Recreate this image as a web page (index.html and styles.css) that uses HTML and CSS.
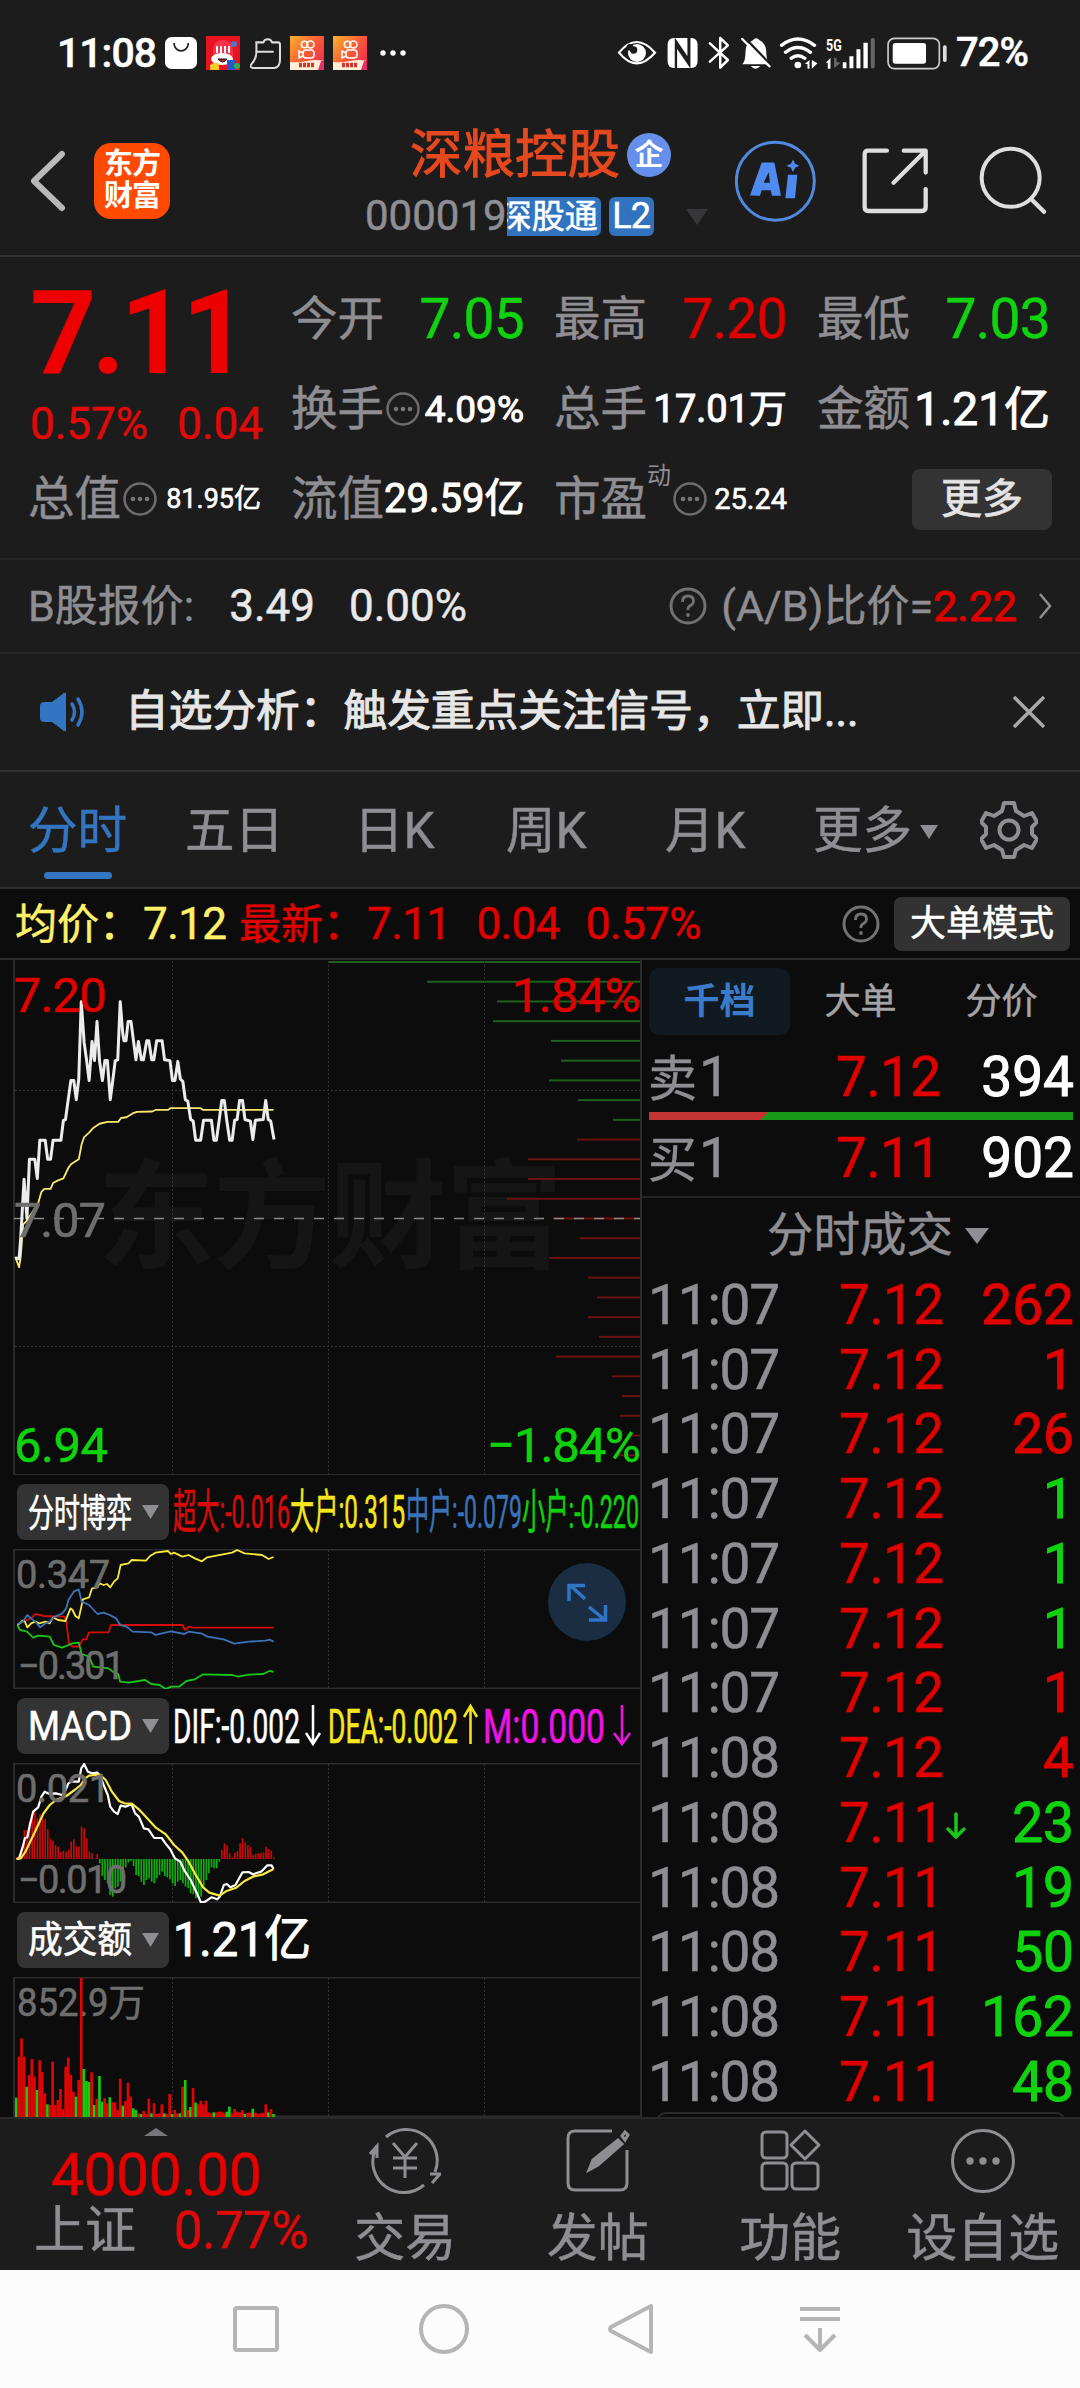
FILE: index.html
```html
<!DOCTYPE html>
<html lang="zh-CN">
<head>
<meta charset="utf-8">
<title>深粮控股 000019</title>
<link rel="stylesheet" href="styles.css">
</head>
<body>
<div class="statusbar">
  <span class="clock">11:08</span>
  <svg class="bag" viewBox="375 50 97 97" width="32" height="32"><rect x="375" y="50" width="97" height="97" rx="20" fill="#fff"/><path d="M402 68c2 32 42 32 44 0" fill="none" stroke="#1c1c1c" stroke-width="5"/></svg>
  <svg class="promo" viewBox="0 0 34 34" width="34" height="34"><rect width="34" height="34" fill="#e8131f"/><path d="M7 16c0-9 4-12 10-12s10 4 10 12v8H7z" fill="#f4334a"/><path d="M10 10h2v7h-2zM14 10h2v7h-2zM18 10h2v7h-2zM22 10h2v7h-2z" fill="#fff"/><ellipse cx="16" cy="23" rx="11" ry="6" fill="#fff"/><path d="M12 23q5 6 9 0z" fill="#c8211c" stroke="#111"/><path d="M4 29q5-4 9-1v6H4z" fill="#ffc928"/><rect x="21" y="24" width="9" height="10" fill="#2458c8"/><circle cx="31" cy="30" r="3" fill="#2fae4e"/><circle cx="28" cy="8" r="3" fill="#4b78c9"/></svg>
  <svg class="basket" viewBox="630 53 92 92" width="31" height="31"><path d="M648 66h22q2-9 13-9 10 0 12 9h18q6 0 6 7v44q0 24-17 25h-62q-11-1-7-10 17-18 16-38V70M648 94h50" fill="none" stroke="#ddd" stroke-width="6" stroke-linejoin="round" stroke-linecap="round"/></svg>
  <svg class="ks" viewBox="0 0 34 34" width="34" height="34"><defs><linearGradient id="ks" x2="1" y2=".8"><stop stop-color="#f9b32d"/><stop offset=".55" stop-color="#fb5a35"/><stop offset="1" stop-color="#ef2b54"/></linearGradient></defs><rect width="34" height="34" fill="url(#ks)"/><g fill="none" stroke="#fff" stroke-width="1.6"><circle cx="14.500" cy="8.500" r="3.200"/><circle cx="20.500" cy="8.500" r="3.500"/><rect x="13" y="14" width="11" height="8" rx="3"/><path d="M13 17l-4-2v7l4-2"/></g><path d="M0 26q8 1 17-1t17 0v9H0z" fill="#fdeed5"/><path d="M9 29h16" stroke="#d2352d" stroke-width="4.500" stroke-dasharray="3 1"/><path d="M28 25h3l-3 9h6v-9z" fill="#e72e6a"/></svg>
  <svg class="ks" viewBox="0 0 34 34" width="34" height="34"><rect width="34" height="34" fill="url(#ks)"/><g fill="none" stroke="#fff" stroke-width="1.6"><circle cx="14.500" cy="8.500" r="3.200"/><circle cx="20.500" cy="8.500" r="3.500"/><rect x="13" y="14" width="11" height="8" rx="3"/><path d="M13 17l-4-2v7l4-2"/></g><path d="M0 26q8 1 17-1t17 0v9H0z" fill="#fdeed5"/><path d="M9 29h16" stroke="#d2352d" stroke-width="4.500" stroke-dasharray="3 1"/><path d="M28 25h3l-3 9h6v-9z" fill="#e72e6a"/></svg>
  <svg class="dots" viewBox="0 0 26 34" width="26" height="34" fill="#fff"><circle cx="3" cy="17" r="2.700"/><circle cx="13" cy="17" r="2.700"/><circle cx="23" cy="17" r="2.700"/></svg>
  <svg class="sysicons" viewBox="48 45 1000 108" width="333" height="36" fill="#fff">
    <path d="M57 98q52-64 108 0q-56 64-108 0z" fill="none" stroke="#fff" stroke-width="6.500"/><circle cx="111" cy="99" r="27"/><circle cx="101" cy="90" r="11" fill="#1c1c1c"/><circle cx="90" cy="82" r="10" fill="#1c1c1c"/>
    <rect x="203" y="54" width="90" height="90" rx="18"/><path d="M228 144V64l38 56V54M228 144V64M268 54v80l-38-56" fill="none" stroke="#1c1c1c" stroke-width="7"/>
    <path d="M330 70l54 50-23 23V54l23 22-54 49" fill="none" stroke="#fff" stroke-width="7.500" stroke-linejoin="round" stroke-linecap="round"/>
    <path d="M427 133q10-8 10-40 0-22 22-32 10-12 20 0 19 9 20 32 0 28 10 40zM453 138h28q-14 17-28 0z"/><path d="M432 50l82 86" stroke="#1c1c1c" stroke-width="7"/><path d="M427 57l82 82" stroke="#fff" stroke-width="7" stroke-linecap="round"/>
    <g fill="none" stroke="#fff" stroke-width="10" stroke-linecap="round"><path d="M545 76q49-38 99 0M557 97q37-29 75 0M574 115q20-16 41 0"/></g><circle cx="594" cy="135" r="10"/><path d="M615 132l14-12v26h-6v-14zM636 120v26l17-16z"/>
    <text x="679" y="92" font-size="49" textLength="47" lengthAdjust="spacingAndGlyphs" font-weight="700">5G</text>
    <path d="M678 128l14-14v32h-8v-18z"/><path d="M703 113v32l19-17-12-3v-12z" fill="#666"/><path d="M729 127h11v18h-11zM749 109h12v36h-12zM770 88h12v57h-12zM791 68h13v77h-13z"/><rect x="813" y="54" width="12" height="91" rx="5" fill="#666"/>
    <rect x="865" y="55" width="154" height="91" rx="19" fill="none" stroke="#ccc" stroke-width="5"/><rect x="879" y="69" width="100" height="62" rx="8"/><rect x="1030" y="76" width="11" height="50" rx="5" fill="#ddd"/>
  </svg>
  <span class="battery">72%</span>
</div>

<header class="titlebar">
  <svg class="back" viewBox="0 0 36 62" width="36" height="62"><path d="M32 4L4 31l28 27" fill="none" stroke="#b9b9bb" stroke-width="6" stroke-linecap="round" stroke-linejoin="round"/></svg>
  <div class="brand"><span>东方</span><span>财富</span></div>
  <div class="stock">
    <div class="name">深粮控股<span class="corp">企</span></div>
    <div class="code">000019<span class="tag clip"><i>深股通</i></span><span class="tag">L2</span>
      <svg class="drop" viewBox="0 0 24 16" width="24" height="16"><path d="M1 0h22L12 16z" fill="#373739"/></svg></div>
  </div>
  <svg class="ai" viewBox="404 363 243 245" width="81" height="82"><circle cx="525" cy="486" r="117" fill="none" stroke="#5289de" stroke-width="9"/><path d="M449 529L484 430h38l20 100h-27l-4-17h-27l-5 17zM490 491h19l-4-32z" fill="#4e8af0" fill-rule="evenodd"/><path d="M563 467h28l-7 70h-29z" fill="#4e8af0"/><path d="M578 421l6 13 13 6-13 6-6 13-6-13-14-6 14-6z" fill="#4e8af0"/></svg>
  <svg class="share" viewBox="788 384 202 202" width="67" height="67"><path d="M863 395h-56q-11 0-11 11v159q0 12 11 12h161q12 0 12-12v-54M914 395h66v66M976 399l-93 93" fill="none" stroke="#dededf" stroke-width="13" stroke-linecap="round" stroke-linejoin="round"/></svg>
  <svg class="search" viewBox="1138 380 204 206" width="68" height="69"><g fill="none" stroke="#dededf" stroke-width="12" stroke-linecap="round"><circle cx="1233" cy="475" r="87"/><path d="M1298 542l35 35" stroke-width="13"/></g></svg>
</header>

<section class="quote">
  <div class="last"><div class="price">7.11</div><div class="chg"><span>0.57%</span><span>0.04</span></div></div>
  <div class="cell">今开<b class="g">7.05</b></div>
  <div class="cell">最高<b class="r">7.20</b></div>
  <div class="cell">最低<b class="g">7.03</b></div>
  <div class="cell">换手<svg class="info" viewBox="0 0 34 34"><use href="#more"/></svg><b class="s37">4.09%</b></div>
  <div class="cell">总手<b class="s38">17.01万</b></div>
  <div class="cell">金额<b class="s46">1.21亿</b></div>
  <div class="cell">总值<svg class="info" viewBox="0 0 34 34"><use href="#more"/></svg><b class="s27">81.95亿</b></div>
  <div class="cell">流值<b class="s40">29.59亿</b></div>
  <div class="cell">市盈<sup>动</sup><svg class="info" viewBox="0 0 34 34"><use href="#more"/></svg><b class="s29">25.24</b></div>
  <div class="cell"><span class="morebtn">更多</span></div>
</section>

<section class="bshare">
  <span>B股报价:</span><span class="w v1">3.49</span><span class="w v2">0.00%</span>
  <svg class="help" viewBox="0 0 38 38" width="38" height="38"><use href="#help"/></svg>
  <span class="ratio">(A/B)比价=<em>2.22</em></span>
  <svg class="chev" viewBox="0 0 14 26" width="14" height="26"><path d="M2 1l10 12L2 25" fill="none" stroke="#8e8e93" stroke-width="2.500"/></svg>
</section>

<section class="notice">
  <svg viewBox="0 0 50 40" width="50" height="40"><path d="M5 10h8L25 1q2-1 2 1v36q0 2-2 1L13 30H5q-4 0-4-4V14q0-4 4-4z" fill="#3375c1"/><path d="M33 12q5 8 0 16M39 7q8 13 0 26" fill="none" stroke="#3375c1" stroke-width="3.500" stroke-linecap="round"/></svg>
  <span>自选分析：触发重点关注信号，立即...</span>
  <svg class="close" viewBox="0 0 34 34" width="34" height="34"><path d="M2 2l30 30M32 2L2 32" stroke="#a9a9ab" stroke-width="3.500"/></svg>
</section>

<nav class="tabs">
  <span class="on">分时</span><span>五日</span><span>日K</span><span>周K</span><span>月K</span>
  <span>更多<svg class="tri" viewBox="0 0 18 14" width="18" height="14"><path d="M0 0h18L9 14z" fill="#8e8e93"/></svg></span>
  <svg class="gear" viewBox="0 0 58 58" width="58" height="58" fill="none" stroke="#8e8e93" stroke-width="4"><path stroke-linejoin="round" d="M24 2h10l2 8 8 5 8-3 5 9-5 5v7l5 5-5 9-8-3-8 5-2 7H24l-2-7-8-5-8 3-5-9 5-5v-7l-5-5 5-9 8 3 8-5z"/><circle cx="29" cy="29" r="9.500"/></svg>
</nav>

<section class="avg">
  <span class="y">均价：<b>7.12</b></span><span class="r">最新：<b>7.11</b><b>0.04</b><b>0.57%</b></span>
  <svg class="help" viewBox="0 0 38 38" width="38" height="38"><use href="#help"/></svg>
  <span class="mode">大单模式</span>
</section>

<main class="board">
  <div class="charts">
    <svg viewBox="0 0 641 515" width="641" height="515">
      <text class="mark" x="97" y="299" textLength="466">东方财富</text>
      <g id="levels"></g>
      <path class="frame" d="M14 0V515M14 515H641"/>
      <path class="grid" d="M172.500 1V515M328.500 1V515M484.500 1V515M15 130.500H640M15 386.500H640"/>
      <path d="M14 258.500H640" stroke="#8a8a8a" stroke-width="1.700" stroke-dasharray="10 10"/>
      <g class="plot" transform="translate(0 -80) scale(.41454 .38265)">
        <polyline stroke="#f9ea6d" points="37,985 46,1012 50,985 56,900 65,890 92,845 100,815 107,807 122,807 128,792 140,785 153,780 165,752 172,742 190,730 197,690 203,672 215,660 225,648 240,637 260,632 285,632 292,622 305,620 320,610 330,606 367,605 375,601 405,601 412,596 483,596 490,601 660,601"/>
        <polyline class="bold" stroke="#ececec" points="37,988 46,990 50,935 58,782 65,885 71,730 84,730 90,780 96,680 109,680 115,730 122,730 128,680 147,680 153,628 158,626 165,570 171,524 178,524 184,574 190,520 196,318 203,425 209,472 215,524 222,422 228,472 234,370 240,472 247,524 253,472 259,472 266,574 272,524 278,472 284,470 290,318 296,400 299,420 304,420 309,370 316,370 322,420 328,470 334,422 341,470 346,470 354,420 359,420 366,470 371,470 378,420 391,420 397,470 410,472 416,524 422,524 429,474 435,520 441,526 447,574 453,578 460,626 466,630 472,680 484,680 491,628 510,628 516,680 522,680 529,626 535,576 541,576 547,628 554,680 560,680 566,628 572,626 578,576 585,576 591,626 604,630 610,678 616,628 635,626 641,576 647,626 653,630 661,678"/>
      </g>
      <g class="axis">
        <text x="14" y="52" textLength="93" color="#e00000">7.20</text>
        <text x="14" y="277" textLength="92" color="#6e6e6e">7.07</text>
        <text x="14" y="502" textLength="94" color="#0fd30f">6.94</text>
        <text x="512" y="52" textLength="129" color="#e00000">1.84%</text>
        <text x="487" y="502" textLength="154" color="#0fd30f">−1.84%</text>
      </g>
    </svg>
    <div class="ind">
      <span class="pick"><svg viewBox="0 0 152 56" width="152" height="56"><text x="11" y="42" font-size="38" textLength="104" lengthAdjust="spacingAndGlyphs">分时博弈</text><path d="M125 21h17l-8.500 14z" fill="#8e8e93"/></svg></span>
      <svg viewBox="173 0 467 74" width="467" height="74" font-size="47">
        <text x="173" y="53" textLength="117" lengthAdjust="spacingAndGlyphs" color="#d80b0b">超大:-0.016</text>
        <text x="290" y="53" textLength="115" lengthAdjust="spacingAndGlyphs" color="#f8e71c">大户:0.315</text>
        <text x="406" y="53" textLength="116" lengthAdjust="spacingAndGlyphs" color="#3b73b9">中户:-0.079</text>
        <text x="522" y="53" textLength="117" lengthAdjust="spacingAndGlyphs" color="#0fd30f">小户:-0.220</text>
      </svg>
    </div>
    <svg viewBox="0 0 641 140" width="641" height="140">
      <path class="frame" d="M14 .500H640M14 0V140M14 139.500H640"/>
      <path class="grid" d="M172.500 1V139M328.500 1V139M484.500 1V139"/>
      <g class="plot" transform="translate(0 -79) scale(.41454 .33333)">
        <polyline stroke="#d80b0b" points="42,462 75,445 85,432 105,438 155,440 160,455 166,520 175,530 190,530 200,508 208,508 215,487 262,487 268,465 440,465 447,480 455,470 465,473 660,473"/>
        <polyline stroke="#f8e93c" points="42,465 48,460 54,452 60,455 66,472 75,460 85,455 95,460 110,455 120,460 128,442 140,450 158,453 170,415 175,420 182,438 190,445 200,388 215,382 222,355 235,352 240,340 250,345 258,342 266,352 275,335 284,325 291,285 310,280 318,270 352,272 362,258 375,248 405,243 412,252 420,248 440,260 455,255 470,265 487,274 500,262 560,248 572,240 590,250 632,255 648,267 660,261"/>
        <polyline stroke="#3b73b9" points="42,462 55,455 66,435 75,445 85,455 97,472 110,460 120,455 130,442 150,430 160,415 165,390 178,365 190,358 197,395 215,405 235,432 250,428 265,435 280,445 290,465 305,470 320,485 365,487 375,495 412,484 445,492 455,485 485,490 500,500 540,508 565,521 600,515 640,512 650,509 660,515"/>
        <polyline stroke="#17c817" points="42,465 48,480 65,485 80,503 92,497 120,500 130,525 150,533 165,525 175,520 190,518 197,552 215,560 225,590 262,595 275,608 285,612 290,635 310,638 350,630 365,642 385,645 400,657 412,650 432,650 450,633 470,628 490,613 560,615 575,620 600,614 635,612 650,603 660,606"/>
      </g>
      <g class="scale"><text x="16" y="39" textLength="94">0.347</text><text x="18" y="130" textLength="107">−0.301</text></g>
      <circle cx="587" cy="53" r="39" fill="#1a2d43"/><path d="M585 50L570 36M569 52V36.500H585M589 58l16 13M605.500 56V71H589" fill="none" stroke="#2f76c6" stroke-width="3.500"/>
    </svg>
    <div class="ind">
      <span class="pick"><svg viewBox="0 0 152 56" width="152" height="56"><text x="11" y="42" font-size="41" textLength="104" lengthAdjust="spacingAndGlyphs">MACD</text><path d="M125 21h17l-8.500 14z" fill="#8e8e93"/></svg></span>
      <svg viewBox="173 0 467 74" width="467" height="74" font-size="49">
        <text x="173" y="54" textLength="127" lengthAdjust="spacingAndGlyphs" color="#fff">DIF:-0.002</text>
        <path d="M313 16V54M306 44l7 11 7-11" stroke="#fff" class="arr"/>
        <text x="328" y="54" textLength="130" lengthAdjust="spacingAndGlyphs" color="#f8e71c">DEA:-0.002</text>
        <path d="M470.500 55V17M464 28l6.500-11 6.500 11" stroke="#f8e71c" class="arr"/>
        <text x="483" y="54" textLength="122" lengthAdjust="spacingAndGlyphs" color="#f012e6">M:0.000</text>
        <path d="M622 16V54M614 44l8 11 8-11" stroke="#f012e6" class="arr"/>
      </svg>
    </div>
    <svg viewBox="0 0 641 140" width="641" height="140">
      <path class="frame" d="M14 .500H640M14 0V140M14 139.500H640"/>
      <path class="grid" d="M172.500 1V139M328.500 1V139M484.500 1V139"/>
      <g transform="translate(0 -13) scale(.41454 .33333)" id="macd"></g>
      <g class="plot" transform="translate(0 -13) scale(.41454 .33333)">
        <polyline class="mid" stroke="#fff" points="40,327 46,325 55,290 60,265 66,262 72,225 80,185 92,172 100,140 108,125 118,131 135,130 150,135 158,120 165,100 172,95 190,95 196,55 203,42 212,65 222,70 235,68 243,82 250,105 260,135 266,170 275,185 284,192 291,167 303,170 312,165 318,165 326,190 335,200 347,235 358,238 372,264 390,264 400,282 410,296 422,325 435,335 445,362 460,390 475,430 485,458 495,455 510,442 524,448 530,440 540,405 547,402 556,412 568,405 585,367 600,366 610,373 630,365 645,346 655,346 660,357"/>
        <polyline class="mid" stroke="#f8e93c" points="40,327 50,325 60,308 75,270 90,230 105,190 120,165 135,150 160,138 180,120 195,105 205,85 215,77 240,73 255,90 270,125 287,153 300,160 318,161 335,178 350,198 375,232 400,253 420,285 440,308 455,335 470,370 490,412 505,428 530,437 545,424 570,413 590,393 610,380 635,373 660,357"/>
      </g>
      <g class="scale"><text x="16" y="39" textLength="94">0.021</text><text x="18" y="130" textLength="109">−0.010</text></g>
    </svg>
    <div class="ind">
      <span class="pick"><svg viewBox="0 0 152 56" width="152" height="56"><text x="11" y="41" font-size="37" textLength="104" lengthAdjust="spacingAndGlyphs">成交额</text><path d="M125 21h17l-8.500 14z" fill="#8e8e93"/></svg></span>
      <svg viewBox="173 0 467 74" width="467" height="74" font-size="49"><text class="strong" x="173" y="53" textLength="138" lengthAdjust="spacingAndGlyphs" color="#fff">1.21亿</text></svg>
    </div>
    <svg viewBox="0 0 641 140" width="641" height="140">
      <path class="frame" d="M14 .500H640M14 0V140M14 139.500H640"/>
      <path class="grid" d="M172.500 1V139M328.500 1V139M484.500 1V139"/>
      <g class="scale"><text x="17" y="39" textLength="128" lengthAdjust="spacingAndGlyphs">852.9万</text></g>
      <g transform="translate(0 -227) scale(.41454 .33333)" id="turnover"></g>
    </svg>
  </div>

  <aside class="book">
    <div class="seg"><span class="on">千档</span><span>大单</span><span>分价</span></div>
    <div class="lv"><span>卖<i>1</i></span><b>7.12</b><em>394</em></div>
    <div class="split"></div>
    <div class="lv"><span>买<i>1</i></span><b>7.11</b><em>902</em></div>
    <div class="deals">分时成交<svg viewBox="0 0 24 16" width="24" height="16"><path d="M0 0h24L12 16z" fill="#8e8e93"/></svg></div>
    <div class="ticks">
      <div><span>11:07</span><b>7.12</b><em class="r">262</em></div>
      <div><span>11:07</span><b>7.12</b><em class="r">1</em></div>
      <div><span>11:07</span><b>7.12</b><em class="r">26</em></div>
      <div><span>11:07</span><b>7.12</b><em class="g">1</em></div>
      <div><span>11:07</span><b>7.12</b><em class="g">1</em></div>
      <div><span>11:07</span><b>7.12</b><em class="g">1</em></div>
      <div><span>11:07</span><b>7.12</b><em class="r">1</em></div>
      <div><span>11:08</span><b>7.12</b><em class="r">4</em></div>
      <div><span>11:08</span><b>7.11<svg viewBox="0 0 20 28" width="20" height="28"><path d="M10 2V25M2 17l8 8 8-8" fill="none" stroke="#17c817" stroke-width="3.500" stroke-linecap="round"/></svg></b><em class="g">23</em></div>
      <div><span>11:08</span><b>7.11</b><em class="g">19</em></div>
      <div><span>11:08</span><b>7.11</b><em class="g">50</em></div>
      <div><span>11:08</span><b>7.11</b><em class="g">162</em></div>
      <div><span>11:08</span><b>7.11</b><em class="g">48</em></div>
    </div>
    <div class="peek"></div>
  </aside>
</main>

<footer class="toolbar">
  <div class="index">
    <svg viewBox="0 0 24 8" width="24" height="8"><path d="M0 8L12 0l12 8z" fill="#77777b"/></svg>
    <div class="pt">4000.00</div>
    <div class="sh"><span>上证</span><b>0.77%</b></div>
  </div>
  <div class="item"><svg viewBox="0 0 72 66" width="72" height="66"><path d="M17 9A31 31 0 0 1 66 44M55 57A31 31 0 0 1 6 22M1 26l7-8v12M61 46h10l-8 9M24 15l12 14 12-14M36 29V50M24 30h24M24 40h24"/></svg>交易</div>
  <div class="item"><svg viewBox="0 0 66 66" width="66" height="66"><path d="M47 3H10Q3 3 3 10V55Q3 62 10 62H55Q62 62 62 55V22M57 8l3-4 3 3-3 5z"/><path d="M24 42l4-10L53 12l4 4L33 37z" fill="#8e8e93"/></svg>发帖</div>
  <div class="item"><svg viewBox="0 0 66 66" width="66" height="66"><rect x="5" y="4" width="25" height="26" rx="4"/><rect x="5" y="35" width="25" height="26" rx="4"/><rect x="35" y="35" width="26" height="26" rx="4"/><path d="M48 3l14 14-14 14-14-14z" stroke-linejoin="round"/></svg>功能</div>
  <div class="item"><svg viewBox="0 0 66 66" width="66" height="66"><circle cx="33" cy="33" r="30.500"/><g fill="#8e8e93" stroke="none"><circle cx="20" cy="33" r="3.700"/><circle cx="33" cy="33" r="3.700"/><circle cx="46" cy="33" r="3.700"/></g></svg>设自选</div>
</footer>

<div class="sysnav">
  <svg viewBox="0 0 50 50" width="50" height="50"><rect x="4" y="4" width="42" height="42" rx="2"/></svg>
  <svg viewBox="0 0 50 50" width="50" height="50"><circle cx="25" cy="25" r="23"/></svg>
  <svg viewBox="0 0 50 50" width="50" height="50"><path d="M44 2v46L4 27q-2-2 0-4z"/></svg>
  <svg viewBox="0 0 50 50" width="50" height="50"><path d="M5 5h40M5 15h40M25 24V46M10 31l15 15 15-15"/></svg>
</div>

<svg class="defs" width="0" height="0"><defs>
  <g id="more"><circle cx="17" cy="17" r="15.500" fill="none" stroke="#6d6d6f" stroke-width="2.500"/><g fill="#77777a"><circle cx="10" cy="17" r="2.300"/><circle cx="17" cy="17" r="2.300"/><circle cx="24" cy="17" r="2.300"/></g></g>
  <g id="help"><circle cx="19" cy="19" r="17" fill="none" stroke="#727274" stroke-width="3"/><path d="M13.500 15q0-6 5.500-6t5.500 5q0 3-3 4.500T19 23" fill="none" stroke="#727274" stroke-width="2.800"/><circle cx="19" cy="28" r="1.900" fill="#727274"/></g>
</defs></svg>
<script src="charts.js"></script>
</body>
</html>
```
FILE: styles.css
```css
* { box-sizing: border-box; }
body { margin: 0; width: 1080px; background: #1c1c1c; color: #8e8e93; font-family: Roboto, "Noto Sans CJK SC", sans-serif; line-height: 1; white-space: nowrap; -webkit-text-stroke: .5px; }
svg { display: block; flex: none; }
svg text { font-family: Roboto, "Noto Sans CJK SC", sans-serif; white-space: pre; -webkit-text-stroke: 0; }
b, em, i { font-weight: 400; font-style: normal; }
.r { color: #e00000; }
.g { color: #0fd30f; }
.defs { position: absolute; }

.statusbar { display: flex; align-items: center; height: 106px; padding-left: 57px; color: #fff; }
.clock { width: 108px; font-size: 41px; font-weight: 500; letter-spacing: -1px; }
.promo { margin-left: 9px; }
.basket { margin-left: 10px; }
.ks { margin-left: 9px; }
.dots { margin-left: 13px; }
.sysicons { margin-left: 210px; }
.battery { margin-left: 7px; font-size: 40px; font-weight: 500; letter-spacing: -1px; }

.titlebar { display: flex; align-items: center; height: 151px; padding: 0 33px 0 30px; border-bottom: 2px solid #333; }
.brand { display: flex; flex-direction: column; justify-content: center; gap: 3px; width: 76px; height: 76px; margin-left: 28px; border-radius: 17px; background: #ff4a03; color: #fff; font-size: 29px; font-weight: 700; text-align: center; letter-spacing: -1px; -webkit-text-stroke: 0; }
.brand span { height: 29px; }
.stock { width: 565px; padding-left: 195px; }
.name { display: flex; align-items: center; padding-left: 45px; color: #e6481f; font-size: 52.5px; height: 60px; -webkit-text-stroke: 1px; }
.corp { display: flex; align-items: center; justify-content: center; width: 44px; height: 44px; margin-left: 7px; border-radius: 50%; background: #668fec; color: #fff; font-size: 29px; font-weight: 700; -webkit-text-stroke: 0; }
.code { display: flex; align-items: center; height: 40px; margin-top: 11px; font-size: 42px; }
.tag { display: flex; align-items: center; justify-content: center; width: 45px; height: 39px; margin-left: 8px; border-radius: 6px; background: #3173be; color: #fff; font-size: 36px; letter-spacing: -1px; }
.tag.clip { justify-content: flex-end; width: 94px; margin-left: 0; padding-right: 3px; border-radius: 0 6px 6px 0; overflow: hidden; font-size: 33px; letter-spacing: 0; }
.drop { margin-left: 31px; margin-top: 2px; }
.share { margin-left: 46px; }
.search { margin-left: auto; }

.quote { display: grid; grid-template-columns: repeat(4, 233px); grid-template-rows: repeat(3, 90px); column-gap: 30px; height: 303px; padding: 17px 0 0 28px; border-bottom: 2px solid #262626; }
.last { grid-row: span 2; padding: 1px 0 0 2px; color: #ee0000; width: 240px; }
.price { font-size: 116px; font-weight: 700; height: 97px; letter-spacing: -5px; -webkit-text-stroke: 0; }
.chg { display: flex; justify-content: space-between; margin-top: 30px; font-size: 44px; color: #e00a0a; width: 233px; }
.cell { display: flex; align-items: center; font-size: 46.5px; }
.cell b { margin-left: auto; font-size: 55px; letter-spacing: -.7px; }
.cell b[class^="s"] { color: #fff; -webkit-text-stroke: 1px; letter-spacing: 0; }
.cell b.s37 { font-size: 37px; }
.cell b.s38 { font-size: 38px; }
.cell b.s46 { font-size: 46px; }
.cell b.s27 { font-size: 27px; -webkit-text-stroke: .6px; }
.cell b.s40 { font-size: 40px; }
.cell b.s29 { font-size: 29px; -webkit-text-stroke: .6px; }
.info { width: 34px; height: 34px; margin-left: 2px; }
.cell sup { align-self: flex-start; padding-top: 10px; font-size: 24px; -webkit-text-stroke: 0; }
.morebtn { display: flex; align-items: center; justify-content: center; width: 140px; height: 61px; margin-left: auto; margin-right: -2px; border-radius: 8px; background: #333; color: #e4e4e4; font-size: 41px; -webkit-text-stroke: .8px; }

.bshare { display: flex; align-items: center; height: 94px; padding: 0 28px 0 28px; border-bottom: 2px solid #262626; font-size: 43px; }
.w { color: #e9e9e9; font-size: 44px; }
.v1 { margin-left: 35px; }
.v2 { margin-left: 34px; }
.bshare .help { margin-left: auto; }
.ratio { margin-left: 14px; }
.ratio em { font-size: 43px; color: #e00000; -webkit-text-stroke: 1px; }
.chev { margin-left: 21px; }

.notice { display: flex; align-items: center; height: 118px; padding: 0 34px 0 39px; border-bottom: 2px solid #303030; color: #e6e6e6; font-size: 43.7px; -webkit-text-stroke: 1px; }
.notice span { margin-left: 36px; }
.close { margin-left: auto; }

.tabs { display: grid; grid-template-columns: 157px 169px 152px 159px 148px 167px 58px; align-items: center; height: 117px; padding: 0 0 0 28px; border-bottom: 2px solid #303030; font-size: 49.5px; }
.tabs span { display: flex; align-items: center; position: relative; height: 100%; padding-top: 4px; }
.tabs .on { color: #3375c1; }
.tabs .on::after { content: ""; position: absolute; left: 16px; bottom: 8px; width: 68px; height: 7px; border-radius: 4px; background: #3375c1; }
.tri { margin-left: 8px; }

.avg { display: flex; align-items: center; height: 71px; padding: 0 10px 0 15px; background: #0c0c0c; border-bottom: 2px solid #2d2d2d; font-size: 42px; }
.avg b { font-size: 44px; letter-spacing: -.6px; }
.avg .y { width: 224px; color: #fff06a; }
.avg .y b { margin-left: 2px; }
.avg .r b { margin-left: 2px; }
.avg .r b + b { margin-left: 26px; }
.avg .help { margin-left: auto; }
.mode { display: flex; align-items: center; justify-content: center; width: 176px; height: 54px; margin-left: 14px; border-radius: 7px; background: #323232; color: #fff; font-size: 36px; }

.board { display: flex; height: 1157px; background: #0c0c0c; overflow: hidden; }
.charts { width: 642px; border-right: 2px solid #2d2d2d; }
.charts text { fill: currentColor; stroke: currentColor; stroke-width: .6; }
.charts .strong { stroke-width: 1.1; }
.frame { fill: none; stroke: #2b2b2b; stroke-width: 2; }
.grid { fill: none; stroke: #333; stroke-width: 1; stroke-dasharray: 2 2; }
.plot { fill: none; stroke-width: 1.8; stroke-linejoin: round; }
.plot polyline { vector-effect: non-scaling-stroke; }
.plot .bold { stroke-width: 3; }
.plot .mid { stroke-width: 2.2; }
.charts .mark { font-size: 118px; font-weight: 700; color: #151515; stroke: none; }
.axis { font-size: 49px; }
.scale { font-size: 38px; color: #6e6e6e; }
.ind { display: flex; align-items: center; height: 74px; padding-left: 17px; }
.ind > svg { margin-left: 4px; }
.pick { width: 152px; height: 56px; border-radius: 8px; background: #333; color: #fff; }
.arr { fill: none; stroke-width: 2.5; }

.book { flex: 1; color: #8e8e93; }
.seg { display: grid; grid-template-columns: repeat(3, 141px); height: 67px; margin: 8px 0 0 7px; font-size: 36px; color: #a4a4a6; }
.seg span { display: flex; align-items: center; justify-content: center; border-radius: 10px; }
.seg .on { background: #111921; color: #3a7cc9; font-weight: 700; -webkit-text-stroke: 0; }
.lv, .ticks div { display: grid; grid-template-columns: 188px 130px 1fr; align-items: center; padding: 0 6px 0 6px; font-size: 55px; }
.lv { height: 77px; padding-top: 8px; }
.lv span { font-size: 49px; }
.lv i { font-size: 55px; margin-left: 2px; }
.lv b, .ticks b { color: #e00000; letter-spacing: -.7px; }
.lv em, .ticks em { text-align: right; -webkit-text-stroke: 1px; }
.lv em { color: #fff; }
.split { height: 8px; margin: 0 7px 0 7px; background: linear-gradient(135deg, #c53434 0 27.6%, #179b17 27.6%); }
.split + .lv { height: 78px; padding-top: 0; border-bottom: 2px solid #232323; }
.deals { display: flex; align-items: center; height: 75px; padding-left: 125px; font-size: 46.500px; }
.deals svg { margin-left: 12px; }
.ticks div { height: 64.75px; }
.ticks span { letter-spacing: -1.2px; }
.ticks b { display: flex; align-items: center; padding-left: 3px; }
.ticks svg { margin: 6px 0 0 3px; }
.peek { width: 410px; height: 20px; margin: -3px 0 0 14px; border: 2px solid #2c2c2c; border-radius: 10px; }

.toolbar { display: flex; height: 153px; border-top: 2px solid #292929; background: #1c1c1c; }
.index { width: 309px; }
.index > svg { margin: 9px 0 0 144px; }
.pt { margin: 9px 0 0 51px; height: 60px; font-size: 59px; color: #e60000; letter-spacing: -.6px; }
.sh { display: flex; align-items: center; margin-left: 34px; height: 50px; font-size: 51px; }
.sh b { margin-left: 38px; font-size: 51px; color: #e00a0a; letter-spacing: -.5px; }
.item { display: flex; flex-direction: column; align-items: center; width: 192.5px; padding-top: 9px; font-size: 51px; }
.item svg { height: 66px; margin-bottom: 19px; fill: none; stroke: #8e8e93; stroke-width: 3; }

.sysnav { display: flex; gap: 138px; height: 118px; padding: 34px 0 0 231px; background: #fcfcfc; }
.sysnav svg { fill: none; stroke: #b5b5b5; stroke-width: 4; stroke-linejoin: round; }
```
FILE: charts.js
```js
const NS = 'http://www.w3.org/2000/svg';
function rect(parent, x, y, w, h, fill) {
  const r = document.createElementNS(NS, 'rect');
  Object.entries({ x, y, width: w, height: h, fill }).forEach(([k, v]) => r.setAttribute(k, v));
  parent.appendChild(r);
}

// Volume at each price level, from the top price down.
const levels = document.getElementById('levels');
[312, 213, 143, 147, 89, 79, 91, 62, 27, 63, 112, 112, 133, 87, 60, 91, 52, 43, 52, 41, 84, 28, 18, 20, 11, 22, 4]
  .forEach((w, i) => rect(levels, 640 - w, 1 + i * 19.73, w, 2, i < 9 ? '#1d611d' : '#6b1212'));

// MACD histogram, one bar per minute around the zero line.
const macd = document.getElementById('macd');
const ZERO = 327, STEP = 6.27;
[322, 318, 300, 240, 240, 215, 190, 182, 205, 193, 205, 207, 238, 266, 272, 285, 290, 306, 303, 305, 300, 275, 268, 288, 290,
 230, 235, 265, 305, 310, 327, 312, 340, 378, 390, 400, 435, 440, 415, 410, 395, 375, 352, 338, 333, 348, 375, 378, 395, 405,
 390, 385, 395, 400, 385, 375, 365, 378, 382, 388, 400, 408, 395, 390, 400, 410, 415, 430, 433, 445, 443, 440, 410, 390, 370,
 352, 355, 355, 335, 300, 280, 286, 310, 322, 308, 303, 280, 265, 277, 285, 292, 315, 312, 310, 309, 307, 290, 297, 302, 323]
  .forEach((y, i) => rect(macd, 38 + i * STEP, Math.min(y, ZERO), 4, Math.abs(y - ZERO), y < ZERO ? '#c80c0c' : '#10b010'));

// Turnover per minute; g marks a falling minute.
const turnover = document.getElementById('turnover');
('g1043 r920 r865 r920 g1010 r975 r927 r980 g1020 r931 r966 r1030 g1063 r1065 r935 r1065 r1050 r1017 r1077 r950 r923 r975 r1025 ' +
 'g1040 r990 r684 g957 g993 g996 r967 g1065 r1046 g978 g1055 r1045 r1060 g1042 r1057 r1057 r1080 r986 g1067 r1053 r998 r1040 ' +
 'g1075 g1080 r1090 g1092 r1083 r1092 r1046 g1090 r1060 r1092 r1090 r1063 g1090 r1092 r1032 g1092 r1080 r1090 g1090 r1010 ' +
 'g990 r1080 g1071 r1014 g1058 r1063 r1052 r1063 r1052 r1087 r1090 g1087 r1087 r1085 r1085 r1090 g1085 g1070 r1090 r1077 ' +
 'r1085 r1087 r1080 g1092 r1088 r1088 g1076 r1088 r1092 r1090 r1088 r1063 g1087 r1077 g1092')
  .split(' ').forEach((s, i) => {
    const y = +s.slice(1);
    rect(turnover, 36 + i * STEP, y, 6.5, 1101 - y, s[0] === 'g' ? '#17cc0c' : '#e00505');
  });
```
